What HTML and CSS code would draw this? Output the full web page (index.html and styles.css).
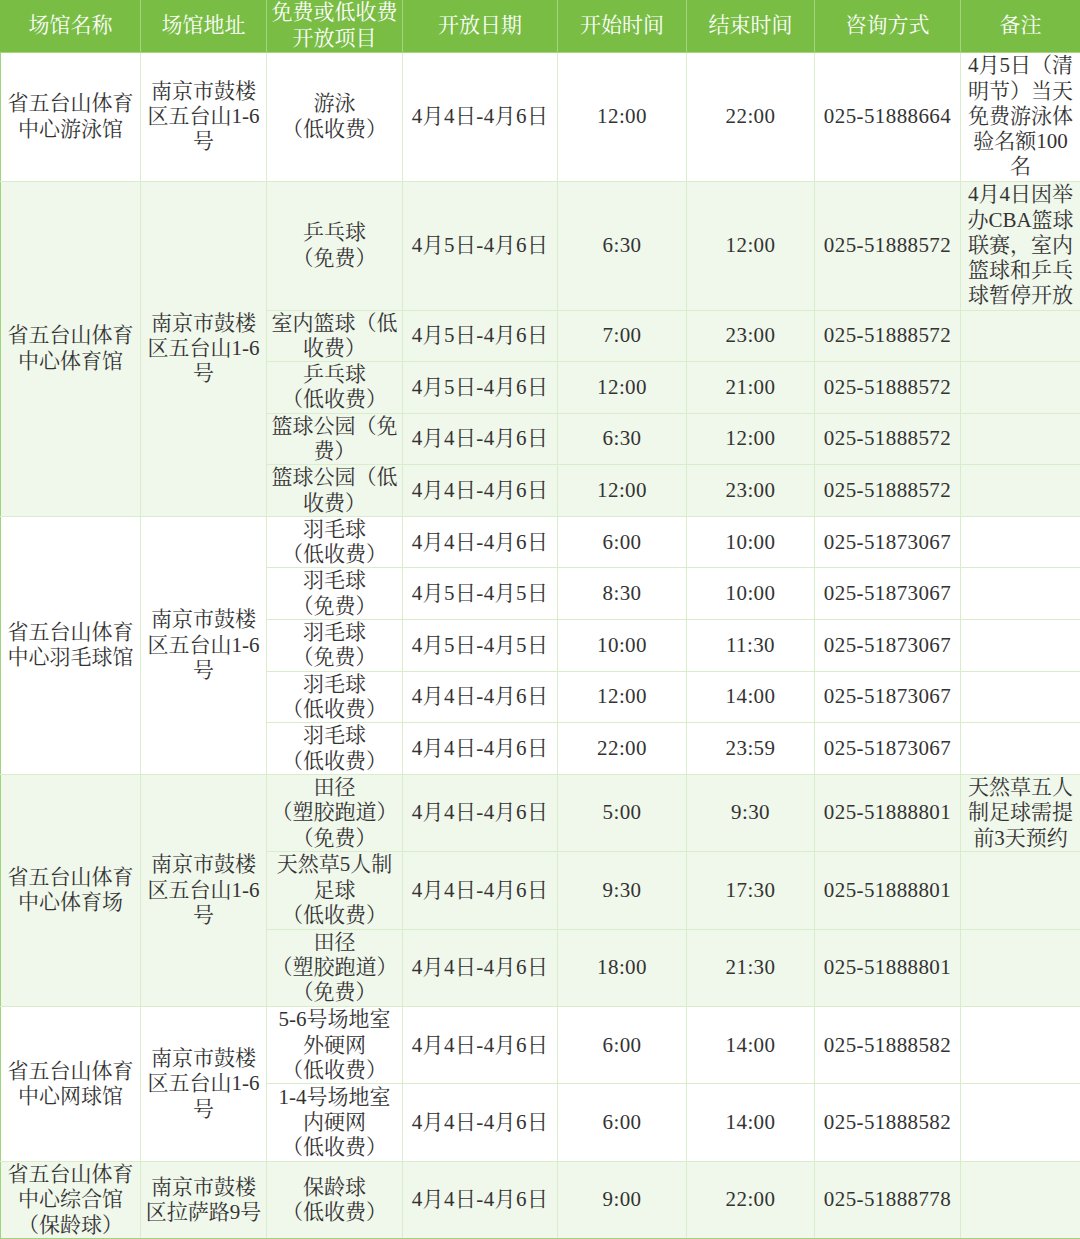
FILE: index.html
```html
<!DOCTYPE html>
<html lang="zh-CN">
<head>
<meta charset="utf-8">
<title>场馆开放信息</title>
<link rel="stylesheet" href="styles.css">
</head>
<body>
<table class="venues">
  <colgroup>
    <col class="c-name"><col class="c-addr"><col class="c-item"><col class="c-date">
    <col class="c-start"><col class="c-end"><col class="c-tel"><col class="c-note">
  </colgroup>
  <thead>
    <tr class="head">
      <th>场馆名称</th>
      <th>场馆地址</th>
      <th>免费或低收费<br>开放项目</th>
      <th>开放日期</th>
      <th>开始时间</th>
      <th>结束时间</th>
      <th>咨询方式</th>
      <th>备注</th>
    </tr>
  </thead>
  <tbody class="white">
    <tr class="h5">
      <td>省五台山体育<br>中心游泳馆</td>
      <td>南京市鼓楼<br>区五台山1-6<br>号</td>
      <td>游泳<br>（低收费）</td>
      <td class="num">4月4日-4月6日</td>
      <td class="num">12:00</td>
      <td class="num">22:00</td>
      <td class="num">025-51888664</td>
      <td>4月5日（清<br>明节）当天<br>免费游泳体<br>验名额100<br>名</td>
    </tr>
  </tbody>
  <tbody class="green">
    <tr class="h5">
      <td rowspan="5">省五台山体育<br>中心体育馆</td>
      <td rowspan="5">南京市鼓楼<br>区五台山1-6<br>号</td>
      <td>乒乓球<br>（免费）</td>
      <td class="num">4月5日-4月6日</td>
      <td class="num">6:30</td>
      <td class="num">12:00</td>
      <td class="num">025-51888572</td>
      <td>4月4日因举<br>办CBA篮球<br>联赛，室内<br>篮球和乒乓<br>球暂停开放</td>
    </tr>
    <tr class="h2">
      <td>室内篮球（低<br>收费）</td>
      <td class="num">4月5日-4月6日</td>
      <td class="num">7:00</td>
      <td class="num">23:00</td>
      <td class="num">025-51888572</td>
      <td></td>
    </tr>
    <tr class="h2">
      <td>乒乓球<br>（低收费）</td>
      <td class="num">4月5日-4月6日</td>
      <td class="num">12:00</td>
      <td class="num">21:00</td>
      <td class="num">025-51888572</td>
      <td></td>
    </tr>
    <tr class="h2">
      <td>篮球公园（免<br>费）</td>
      <td class="num">4月4日-4月6日</td>
      <td class="num">6:30</td>
      <td class="num">12:00</td>
      <td class="num">025-51888572</td>
      <td></td>
    </tr>
    <tr class="h2">
      <td>篮球公园（低<br>收费）</td>
      <td class="num">4月4日-4月6日</td>
      <td class="num">12:00</td>
      <td class="num">23:00</td>
      <td class="num">025-51888572</td>
      <td></td>
    </tr>
  </tbody>
  <tbody class="white">
    <tr class="h2">
      <td rowspan="5">省五台山体育<br>中心羽毛球馆</td>
      <td rowspan="5">南京市鼓楼<br>区五台山1-6<br>号</td>
      <td>羽毛球<br>（低收费）</td>
      <td class="num">4月4日-4月6日</td>
      <td class="num">6:00</td>
      <td class="num">10:00</td>
      <td class="num">025-51873067</td>
      <td></td>
    </tr>
    <tr class="h2">
      <td>羽毛球<br>（免费）</td>
      <td class="num">4月5日-4月5日</td>
      <td class="num">8:30</td>
      <td class="num">10:00</td>
      <td class="num">025-51873067</td>
      <td></td>
    </tr>
    <tr class="h2">
      <td>羽毛球<br>（免费）</td>
      <td class="num">4月5日-4月5日</td>
      <td class="num">10:00</td>
      <td class="num">11:30</td>
      <td class="num">025-51873067</td>
      <td></td>
    </tr>
    <tr class="h2">
      <td>羽毛球<br>（低收费）</td>
      <td class="num">4月4日-4月6日</td>
      <td class="num">12:00</td>
      <td class="num">14:00</td>
      <td class="num">025-51873067</td>
      <td></td>
    </tr>
    <tr class="h2">
      <td>羽毛球<br>（低收费）</td>
      <td class="num">4月4日-4月6日</td>
      <td class="num">22:00</td>
      <td class="num">23:59</td>
      <td class="num">025-51873067</td>
      <td></td>
    </tr>
  </tbody>
  <tbody class="green">
    <tr class="h3">
      <td rowspan="3">省五台山体育<br>中心体育场</td>
      <td rowspan="3">南京市鼓楼<br>区五台山1-6<br>号</td>
      <td>田径<br>（塑胶跑道）<br>（免费）</td>
      <td class="num">4月4日-4月6日</td>
      <td class="num">5:00</td>
      <td class="num">9:30</td>
      <td class="num">025-51888801</td>
      <td>天然草五人<br>制足球需提<br>前3天预约</td>
    </tr>
    <tr class="h3">
      <td>天然草5人制<br>足球<br>（低收费）</td>
      <td class="num">4月4日-4月6日</td>
      <td class="num">9:30</td>
      <td class="num">17:30</td>
      <td class="num">025-51888801</td>
      <td></td>
    </tr>
    <tr class="h3">
      <td>田径<br>（塑胶跑道）<br>（免费）</td>
      <td class="num">4月4日-4月6日</td>
      <td class="num">18:00</td>
      <td class="num">21:30</td>
      <td class="num">025-51888801</td>
      <td></td>
    </tr>
  </tbody>
  <tbody class="white">
    <tr class="h3">
      <td rowspan="2">省五台山体育<br>中心网球馆</td>
      <td rowspan="2">南京市鼓楼<br>区五台山1-6<br>号</td>
      <td>5-6号场地室<br>外硬网<br>（低收费）</td>
      <td class="num">4月4日-4月6日</td>
      <td class="num">6:00</td>
      <td class="num">14:00</td>
      <td class="num">025-51888582</td>
      <td></td>
    </tr>
    <tr class="h3">
      <td>1-4号场地室<br>内硬网<br>（低收费）</td>
      <td class="num">4月4日-4月6日</td>
      <td class="num">6:00</td>
      <td class="num">14:00</td>
      <td class="num">025-51888582</td>
      <td></td>
    </tr>
  </tbody>
  <tbody class="green">
    <tr class="h3">
      <td>省五台山体育<br>中心综合馆<br>（保龄球）</td>
      <td>南京市鼓楼<br>区拉萨路9号</td>
      <td>保龄球<br>（低收费）</td>
      <td class="num">4月4日-4月6日</td>
      <td class="num">9:00</td>
      <td class="num">22:00</td>
      <td class="num">025-51888778</td>
      <td></td>
    </tr>
  </tbody>
</table>
</body>
</html>
```

FILE: styles.css
```css
html, body {
  margin: 0;
  padding: 0;
  background: #ffffff;
}

.venues {
  width: 1080px;
  table-layout: fixed;
  border-collapse: collapse;
  border-spacing: 0;
  font-family: "Liberation Serif", "Noto Serif CJK SC", "Noto Sans CJK SC", serif;
  font-size: 21px;
  line-height: 25.3px;
  color: #333333;
}

.c-name { width: 140px; }
.c-addr { width: 126px; }
.c-item { width: 136px; }
.c-date { width: 155px; }
.c-start { width: 129px; }
.c-end { width: 128px; }
.c-tel { width: 146px; }
.c-note { width: 120px; }

.venues th,
.venues td {
  padding: 0;
  text-align: center;
  vertical-align: middle;
  white-space: nowrap;
  overflow: hidden;
  border: 1px solid #d9edcb;
}

.venues td.num {
  letter-spacing: 0.4px;
}

.head {
  height: 52px;
}

.head th {
  background: #79bd45;
  color: #ffffff;
  font-weight: normal;
  border-color: #a3d47e;
  border-top: none;
}

.head th:first-child { border-left: 1px solid #79bd45; }
.head th:last-child { border-right: 1px solid #79bd45; }

.green td {
  background: #f0f7eb;
}

.white td {
  background: #ffffff;
}

.h2 { height: 51.6px; }
.h3 { height: 77.4px; }
.h5 { height: 129px; }

.venues tbody > tr:first-child > td:first-child {
  border-left: 1px solid #9fd47c;
}

.venues tbody tr > td:last-child {
  border-right: 1px solid #9fd47c;
}

.venues tbody:last-child tr:last-child td {
  border-bottom: 1px solid #9fd47c;
}
```
